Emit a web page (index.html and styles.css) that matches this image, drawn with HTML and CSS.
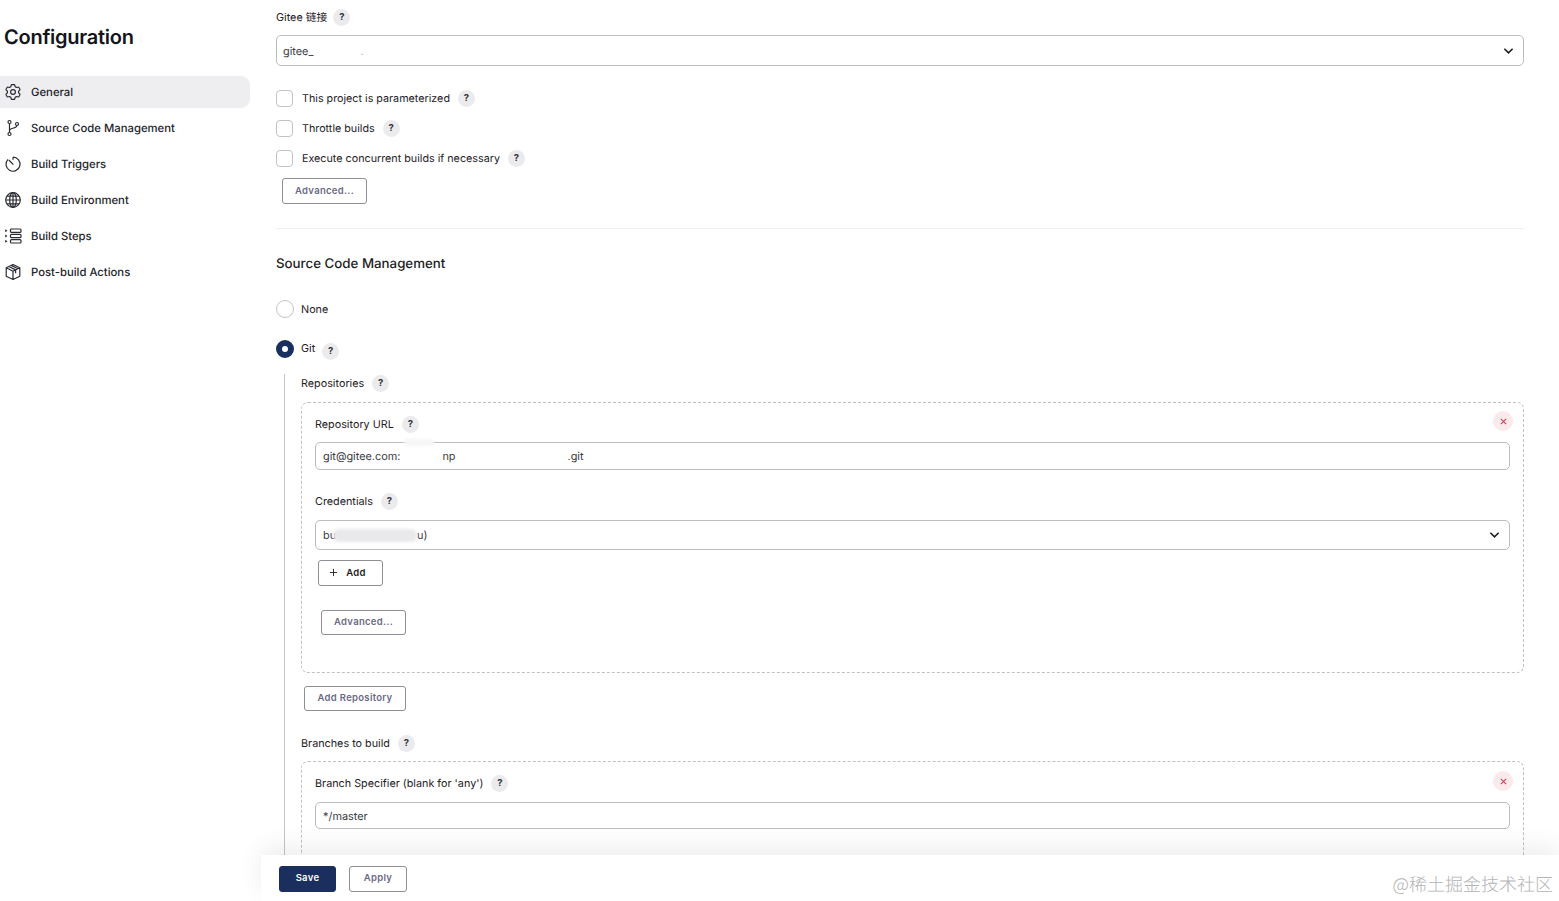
FILE: index.html
```html
<!DOCTYPE html>
<html lang="en">
<head>
<meta charset="utf-8">
<title>Configuration</title>
<link rel="stylesheet" href="styles.css">
</head>
<body>
<div class="page">
  <aside class="sidebar">
    <h1 class="title">Configuration</h1>
    <nav class="nav">
      <a class="nav-item active">
        <svg class="nav-icon" viewBox="0 0 18 18"><path d="M7.400 1.700h3.200l.6 2 1.300.8 2-.5c.3 0 1.700 2.500 1.500 2.800l-1.400 1.400v1.600l1.400 1.400c.2.300-1.200 2.800-1.500 2.800l-2-.5-1.300.8-.6 2H7.400l-.6-2-1.300-.8-2 .5c-.3 0-1.700-2.500-1.500-2.800l1.400-1.400V8.200L2 6.800c-.2-.3 1.200-2.800 1.500-2.800l2 .5 1.300-.8z" stroke-linejoin="round"/><circle cx="9" cy="9" r="2.400"/></svg>
        <span>General</span>
      </a>
      <a class="nav-item">
        <svg class="nav-icon" viewBox="0 0 18 18"><circle cx="5.500" cy="3" r="1.500"/><circle cx="5.500" cy="15" r="1.500"/><circle cx="13" cy="5" r="1.500"/><path d="M5.500 4.500v9M5.500 11.500c0-3 7-1.500 7.500-5"/></svg>
        <span>Source Code Management</span>
      </a>
      <a class="nav-item">
        <svg class="nav-icon" viewBox="0 0 18 18"><path d="M9 2.200a7 7 0 1 1-5 2.100M9 2.200v2.600M4.800 5l4.600 4.600"/></svg>
        <span>Build Triggers</span>
      </a>
      <a class="nav-item">
        <svg class="nav-icon" viewBox="0 0 18 18"><circle cx="9" cy="9" r="7.300"/><ellipse cx="9" cy="9" rx="3.300" ry="7.300"/><path d="M9 1.700v14.600M1.700 9h14.600M2.900 5.200h12.200M2.900 12.800h12.200"/></svg>
        <span>Build Environment</span>
      </a>
      <a class="nav-item">
        <svg class="nav-icon" viewBox="0 0 18 18"><rect x="6.500" y="2" width="10.500" height="3.400" rx="1"/><rect x="6.500" y="7.300" width="10.500" height="3.400" rx="1"/><rect x="6.500" y="12.600" width="10.500" height="3.400" rx="1"/><path class="icon-fill" d="M1.200 2.200l2.300 1.500-2.300 1.500zM1.200 7.500l2.300 1.500-2.300 1.500zM1.200 12.800l2.300 1.500-2.300 1.500z"/></svg>
        <span>Build Steps</span>
      </a>
      <a class="nav-item">
        <svg class="nav-icon" viewBox="0 0 18 18"><path d="M9 1.500l6.800 3.300v8.400L9 16.500l-6.800-3.300V4.800zM2.200 4.800L9 8.200l6.800-3.400M9 8.200v8.300M4.800 3.500l6.800 3.400v3.400M7.200 2.400L14 5.800" stroke-linejoin="round"/></svg>
        <span>Post-build Actions</span>
      </a>
    </nav>
  </aside>

  <main class="main">
    <div class="label-row gitee-label"><span>Gitee 链接</span><span class="help">?</span></div>
    <div class="field select gitee-select"><span>gitee_</span><span class="gitee-dot">.</span><svg class="chevron" viewBox="0 0 12 8"><path d="M1.500 1.500L6 6l4.500-4.500"/></svg></div>

    <div class="check-list">
      <label class="check-row"><span class="box"></span><span>This project is parameterized</span><span class="help">?</span></label>
      <label class="check-row"><span class="box"></span><span>Throttle builds</span><span class="help">?</span></label>
      <label class="check-row"><span class="box"></span><span>Execute concurrent builds if necessary</span><span class="help">?</span></label>
    </div>
    <button class="btn adv-top">Advanced...</button>
    <hr class="divider">
    <h2 class="section-title">Source Code Management</h2>

    <div class="radio-row none-row"><span class="radio"></span><span>None</span></div>
    <div class="radio-row git-row"><span class="radio on"></span><span class="git-text">Git</span><span class="help git-help">?</span></div>

    <div class="git-body">
      <div class="label-row"><span>Repositories</span><span class="help">?</span></div>
      <section class="repeat repo-box">
        <span class="close"><svg viewBox="0 0 8 8"><path d="M1 1l6 6M7 1L1 7"/></svg></span>
        <div class="label-row"><span>Repository URL</span><span class="help">?</span></div>
        <div class="field url-field"><span>git@gitee.com:</span><span class="gap-a"></span><span>np</span><span class="gap-b"></span><span>.git</span><span class="url-smudge"></span></div>
        <div class="label-row cred-label"><span>Credentials</span><span class="help">?</span></div>
        <div class="field select cred-select"><span>bu</span><span class="smudge"></span><span>u)</span><svg class="chevron" viewBox="0 0 12 8"><path d="M1.500 1.500L6 6l4.500-4.500"/></svg></div>
        <button class="btn add-btn"><svg class="plus" viewBox="0 0 10 10"><path d="M5 1v8M1 5h8"/></svg><span>Add</span></button>
        <button class="btn adv-inner">Advanced...</button>
      </section>
      <button class="btn add-repo">Add Repository</button>
      <div class="label-row branches-label"><span>Branches to build</span><span class="help">?</span></div>
      <section class="repeat branch-box">
        <span class="close"><svg viewBox="0 0 8 8"><path d="M1 1l6 6M7 1L1 7"/></svg></span>
        <div class="label-row"><span>Branch Specifier (blank for 'any')</span><span class="help">?</span></div>
        <div class="field branch-field"><span>*/master</span></div>
      </section>
    </div>
  </main>
</div>
<footer class="bottom-bar">
  <button class="btn save">Save</button>
  <button class="btn apply">Apply</button>
</footer>
<div class="watermark">@稀土掘金技术社区</div>
</body>
</html>
```
FILE: styles.css
```css
* { box-sizing: border-box; }
html, body { margin: 0; height: 901px; overflow: hidden; background: #fff; }
body { font-family: Inter, "Noto Sans CJK SC", sans-serif; font-size: 11px; color: #1f2126; position: relative; text-rendering: geometricPrecision; }
.page { display: grid; grid-template-columns: 276px 1248px; height: 901px; overflow: hidden; }
.title { margin: 0; padding: 25px 0 0 4px; font-size: 20px; line-height: 24px; font-weight: 600; color: #14151a; letter-spacing: -0.25px; }
.nav { margin-top: 27px; width: 250px; display: flex; flex-direction: column; gap: 4px; }
.nav-item { height: 32px; display: flex; align-items: center; gap: 9px; padding-left: 4px; border-radius: 0 9px 9px 0; font-size: 11.300px; font-weight: 450; color: #24262b; }
.nav-item.active { background: #eeeef1; font-weight: 500; }
.nav-icon { width: 18px; height: 18px; fill: none; stroke: #2a2c33; stroke-width: 1.200; flex: none; }
.icon-fill { fill: #2a2c33; stroke: none; }

.main { min-width: 0; }
.help { width: 17px; height: 17px; border-radius: 50%; background: #ebebed; display: inline-flex; align-items: center; justify-content: center; font-size: 9.500px; font-weight: 700; color: #33353c; flex: none; }
.label-row { display: flex; align-items: center; gap: 8px; height: 18px; font-size: 10.800px; }
.gitee-label { margin-top: 8px; gap: 6px; }
.field { height: 28px; border: 1px solid #bcbdc1; border-radius: 5px; display: flex; align-items: center; padding-left: 7px; font-size: 10.900px; color: #3a3c42; background: #fff; }
.select { position: relative; padding-right: 9px; }
.chevron { position: absolute; right: 9px; top: 50%; margin-top: -4px; width: 11px; height: 8px; fill: none; stroke: #1c1d22; stroke-width: 1.700; }
.gitee-select { margin-top: 9px; height: 31px; padding-left: 6px; }
.gitee-dot { margin-left: 47px; color: #b0b0b4; }

.check-list { margin-top: 23px; display: flex; flex-direction: column; gap: 12px; }
.check-row { height: 18px; display: flex; align-items: center; font-size: 10.750px; }
.box { width: 17px; height: 17px; border: 1.500px solid #c2c3c7; border-radius: 4px; margin-right: 9px; flex: none; }
.check-row .help { margin-left: 8px; }

.btn { font-family: inherit; font-size: 9.500px; font-weight: 600; letter-spacing: 0.3px; color: #6a6a85; background: #fff; border: 1px solid #8e8f94; border-radius: 3px; display: flex; align-items: center; justify-content: center; padding: 0 0 1px; }
.adv-top { margin: 11px 0 0 6px; width: 85px; height: 26px; }
.divider { margin: 24px 0 0; border: 0; border-top: 1px solid #f0f0f2; }
.section-title { margin: 26px 0 0; font-size: 13.300px; line-height: 18px; font-weight: 500; color: #1c1d22; }

.radio-row { display: flex; align-items: center; font-size: 10.800px; height: 18px; }
.radio { width: 18px; height: 18px; border: 1.500px solid #c2c3c7; border-radius: 50%; margin-right: 7px; flex: none; }
.radio.on { border: 6.500px solid #1b2f5e; background: #fff; }
.none-row { margin-top: 27px; }
.git-row { margin-top: 22px; }
.git-text { position: relative; top: -1px; }
.git-help { margin: 4px 0 0 7px; }

.git-body { margin: 16px 0 0 8px; padding: 0 0 300px 16px; border-left: 1px solid #c3c4c8; height: 700px; }
.repeat { position: relative; margin-top: 10px; border: 1px dashed #c0c1c5; border-radius: 7px; padding: 12px 13px 0; }
.close { position: absolute; right: 10px; top: 8px; width: 20px; height: 20px; border-radius: 50%; background: #fbe9ec; display: flex; align-items: center; justify-content: center; }
.close svg { width: 7px; height: 7px; fill: none; stroke: #d23c56; stroke-width: 1.200; }
.repo-box { height: 271px; }
.url-field { margin-top: 9px; position: relative; }
.gap-a { width: 42px; }
.gap-b { width: 112px; }
.url-smudge { position: absolute; left: 88px; top: -4px; width: 30px; height: 7px; background: #f6f6f7; border-radius: 4px; filter: blur(1.500px); }
.cred-label { margin-top: 22px; }
.cred-select { margin-top: 10px; height: 30px; }
.smudge { width: 84px; height: 13px; background: #e9e9eb; border-radius: 6px; filter: blur(1.500px); margin: 1px 0 0 -3px; }
.add-btn { margin: 10px 0 0 3px; width: 65px; height: 26px; color: #1c1d22; gap: 8px; padding-right: 6px; }
.plus { width: 9px; height: 9px; fill: none; stroke: #1c1d22; stroke-width: 1; }
.adv-inner { margin: 24px 0 0 6px; width: 85px; height: 25px; padding-bottom: 2px; }
.add-repo { margin: 13px 0 0 3px; width: 102px; height: 25px; padding-bottom: 2px; }
.branches-label { margin-top: 23px; }
.branch-box { margin-top: 9px; height: 300px; }
.branch-box .close { top: 9px; }
.branch-field { margin-top: 10px; height: 27px; }

.bottom-bar { position: absolute; left: 261px; right: 0; top: 855px; height: 46px; background: #fff; box-shadow: 0 -8px 24px rgba(0,0,0,0.07); display: flex; align-items: flex-start; gap: 13px; padding: 11px 0 0 18px; }
.save { width: 57px; height: 26px; background: #1b2f5e; border-color: #1b2f5e; color: #fff; padding-bottom: 3px; }
.apply { width: 58px; height: 26px; padding-bottom: 3px; }
.watermark { position: absolute; right: 6px; top: 873px; font-family: "Noto Sans CJK SC", serif; font-size: 18px; line-height: 22px; font-weight: 300; color: #b4b4b6; }
```
